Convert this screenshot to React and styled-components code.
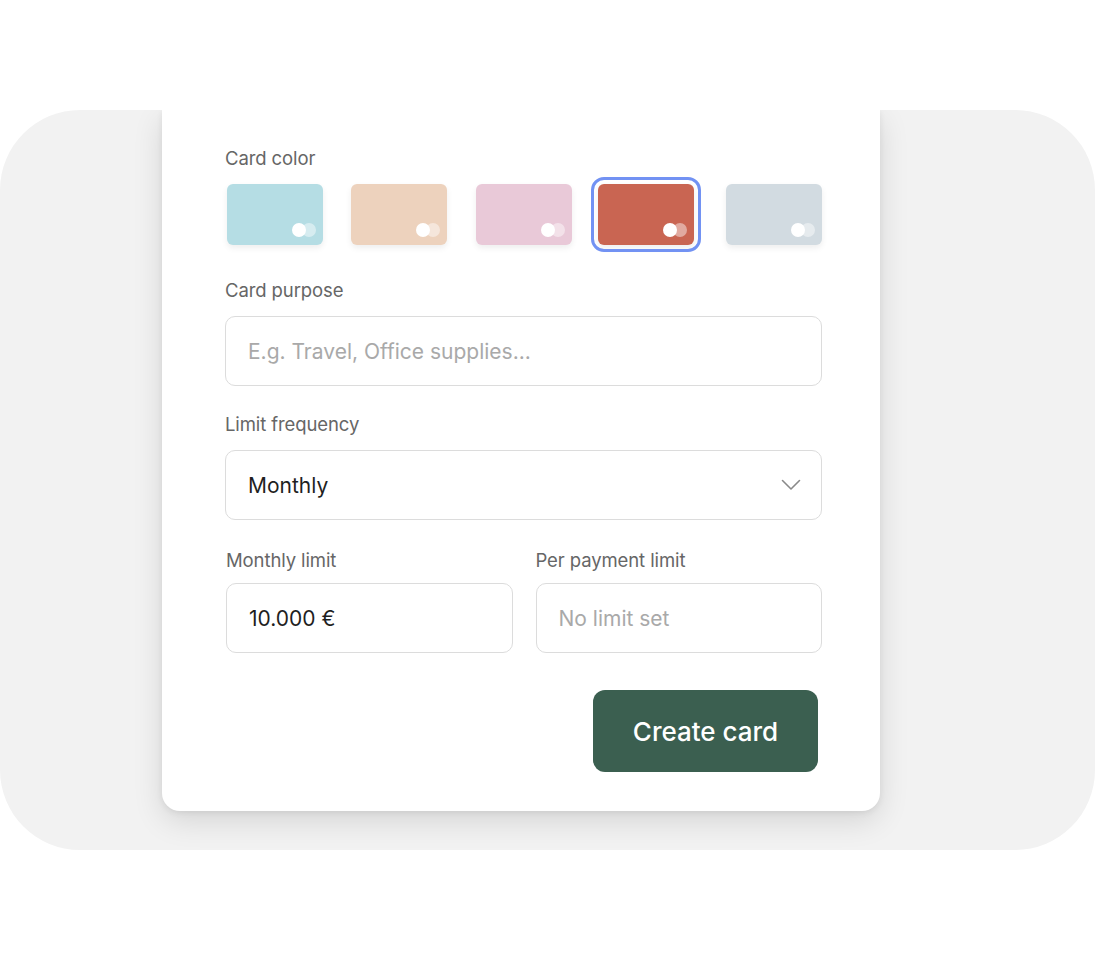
import React from "react";
import styled, { createGlobalStyle } from "styled-components";

const GlobalStyle = createGlobalStyle`
  body {
    margin: 0;
    background: #ffffff;
    font-family: Inter, "Liberation Sans", Arial, sans-serif;
  }
`;

const Page = styled.div`
  width: 1096px;
  height: 960px;
  padding-top: 110px;
  box-sizing: border-box;
`;

const Backdrop = styled.div`
  width: 1095px;
  height: 740px;
  background: #f2f2f2;
  border-radius: 80px;
  overflow: hidden;
`;

const Panel = styled.div`
  width: 718px;
  height: 701px;
  margin-left: 162px;
  box-sizing: border-box;
  padding: 38px 58px 0 63px;
  background: #ffffff;
  border-radius: 0 0 18px 18px;
  box-shadow: 0 10px 30px rgba(0, 0, 0, 0.12), 0 2px 6px rgba(0, 0, 0, 0.07);
  display: flex;
  flex-direction: column;
`;

const Field = styled.div`
  display: flex;
  flex-direction: column;
  margin-top: ${(p) => p.$top || 0}px;
  flex: ${(p) => (p.$grow ? 1 : "none")};
`;

const Label = styled.div`
  font-size: 18.5px;
  line-height: 20px;
  letter-spacing: -0.1px;
  color: #666666;
  margin-bottom: ${(p) => p.$gap || 16}px;
`;

const Swatches = styled.div`
  display: flex;
  justify-content: space-between;
  padding: 0 0 0 2px;
`;

const Swatch = styled.div`
  position: relative;
  width: 96px;
  height: 61px;
  border-radius: 6px;
  background: ${(p) => p.$color};
  box-shadow: 0 3px 6px rgba(0, 0, 0, 0.07);
  outline: ${(p) => (p.$selected ? "3px solid #7292f3" : "none")};
  outline-offset: 4px;
  margin: ${(p) => (p.$selected ? "0 4px 0 -2px" : "0")};
`;

const Dots = styled.div`
  position: absolute;
  right: 7px;
  bottom: 8px;
  display: flex;
`;

const Dot = styled.span`
  width: 14px;
  height: 14px;
  border-radius: 50%;
  background: #ffffff;
  opacity: ${(p) => (p.$faded ? 0.45 : 1)};
  margin-left: ${(p) => (p.$faded ? "-4px" : "0")};
`;

const Box = styled.div`
  height: 70px;
  box-sizing: border-box;
  border: 1.5px solid #dcdcdc;
  border-radius: 10px;
  display: flex;
  align-items: center;
  justify-content: space-between;
  padding: 0 20px 0 22px;
  font-size: 21px;
  color: ${(p) => (p.$placeholder ? "#a9a9a9" : "#1f1f1f")};
`;

const Row = styled.div`
  display: flex;
  gap: 23px;
  margin-top: 30px;
  padding-left: 1px;
`;

const Footer = styled.div`
  display: flex;
  justify-content: flex-end;
  margin-top: 37px;
  padding-right: 4px;
`;

const Button = styled.button`
  width: 225px;
  height: 82px;
  border: none;
  border-radius: 12px;
  background: #3b5f50;
  color: #ffffff;
  font-family: inherit;
  font-size: 26px;
  font-weight: 500;
  cursor: pointer;
`;

const colors = ["#b5dde4", "#edd2bd", "#e9c9d8", "#c96552", "#d2dbe1"];

const Chevron = () => (
  <svg width="20" height="12" viewBox="0 0 20 12" fill="none">
    <polyline points="1.5,1.5 10,10 18.5,1.5" stroke="#8a8a8a" strokeWidth="1.6" strokeLinecap="round" strokeLinejoin="round" />
  </svg>
);

const App = () => {
  return (
    <Page>
      <GlobalStyle />
      <Backdrop>
        <Panel>
          <Field>
            <Label>Card color</Label>
            <Swatches>
              {colors.map((c, i) => (
                <Swatch key={c} $color={c} $selected={i === 3}>
                  <Dots>
                    <Dot />
                    <Dot $faded />
                  </Dots>
                </Swatch>
              ))}
            </Swatches>
          </Field>
          <Field $top={35}>
            <Label>Card purpose</Label>
            <Box $placeholder>E.g. Travel, Office supplies...</Box>
          </Field>
          <Field $top={28}>
            <Label>Limit frequency</Label>
            <Box>
              Monthly
              <Chevron />
            </Box>
          </Field>
          <Row>
            <Field $grow>
              <Label $gap={13}>Monthly limit</Label>
              <Box>10.000 €</Box>
            </Field>
            <Field $grow>
              <Label $gap={13}>Per payment limit</Label>
              <Box $placeholder>No limit set</Box>
            </Field>
          </Row>
          <Footer>
            <Button>Create card</Button>
          </Footer>
        </Panel>
      </Backdrop>
    </Page>
  );
};

export default App;
